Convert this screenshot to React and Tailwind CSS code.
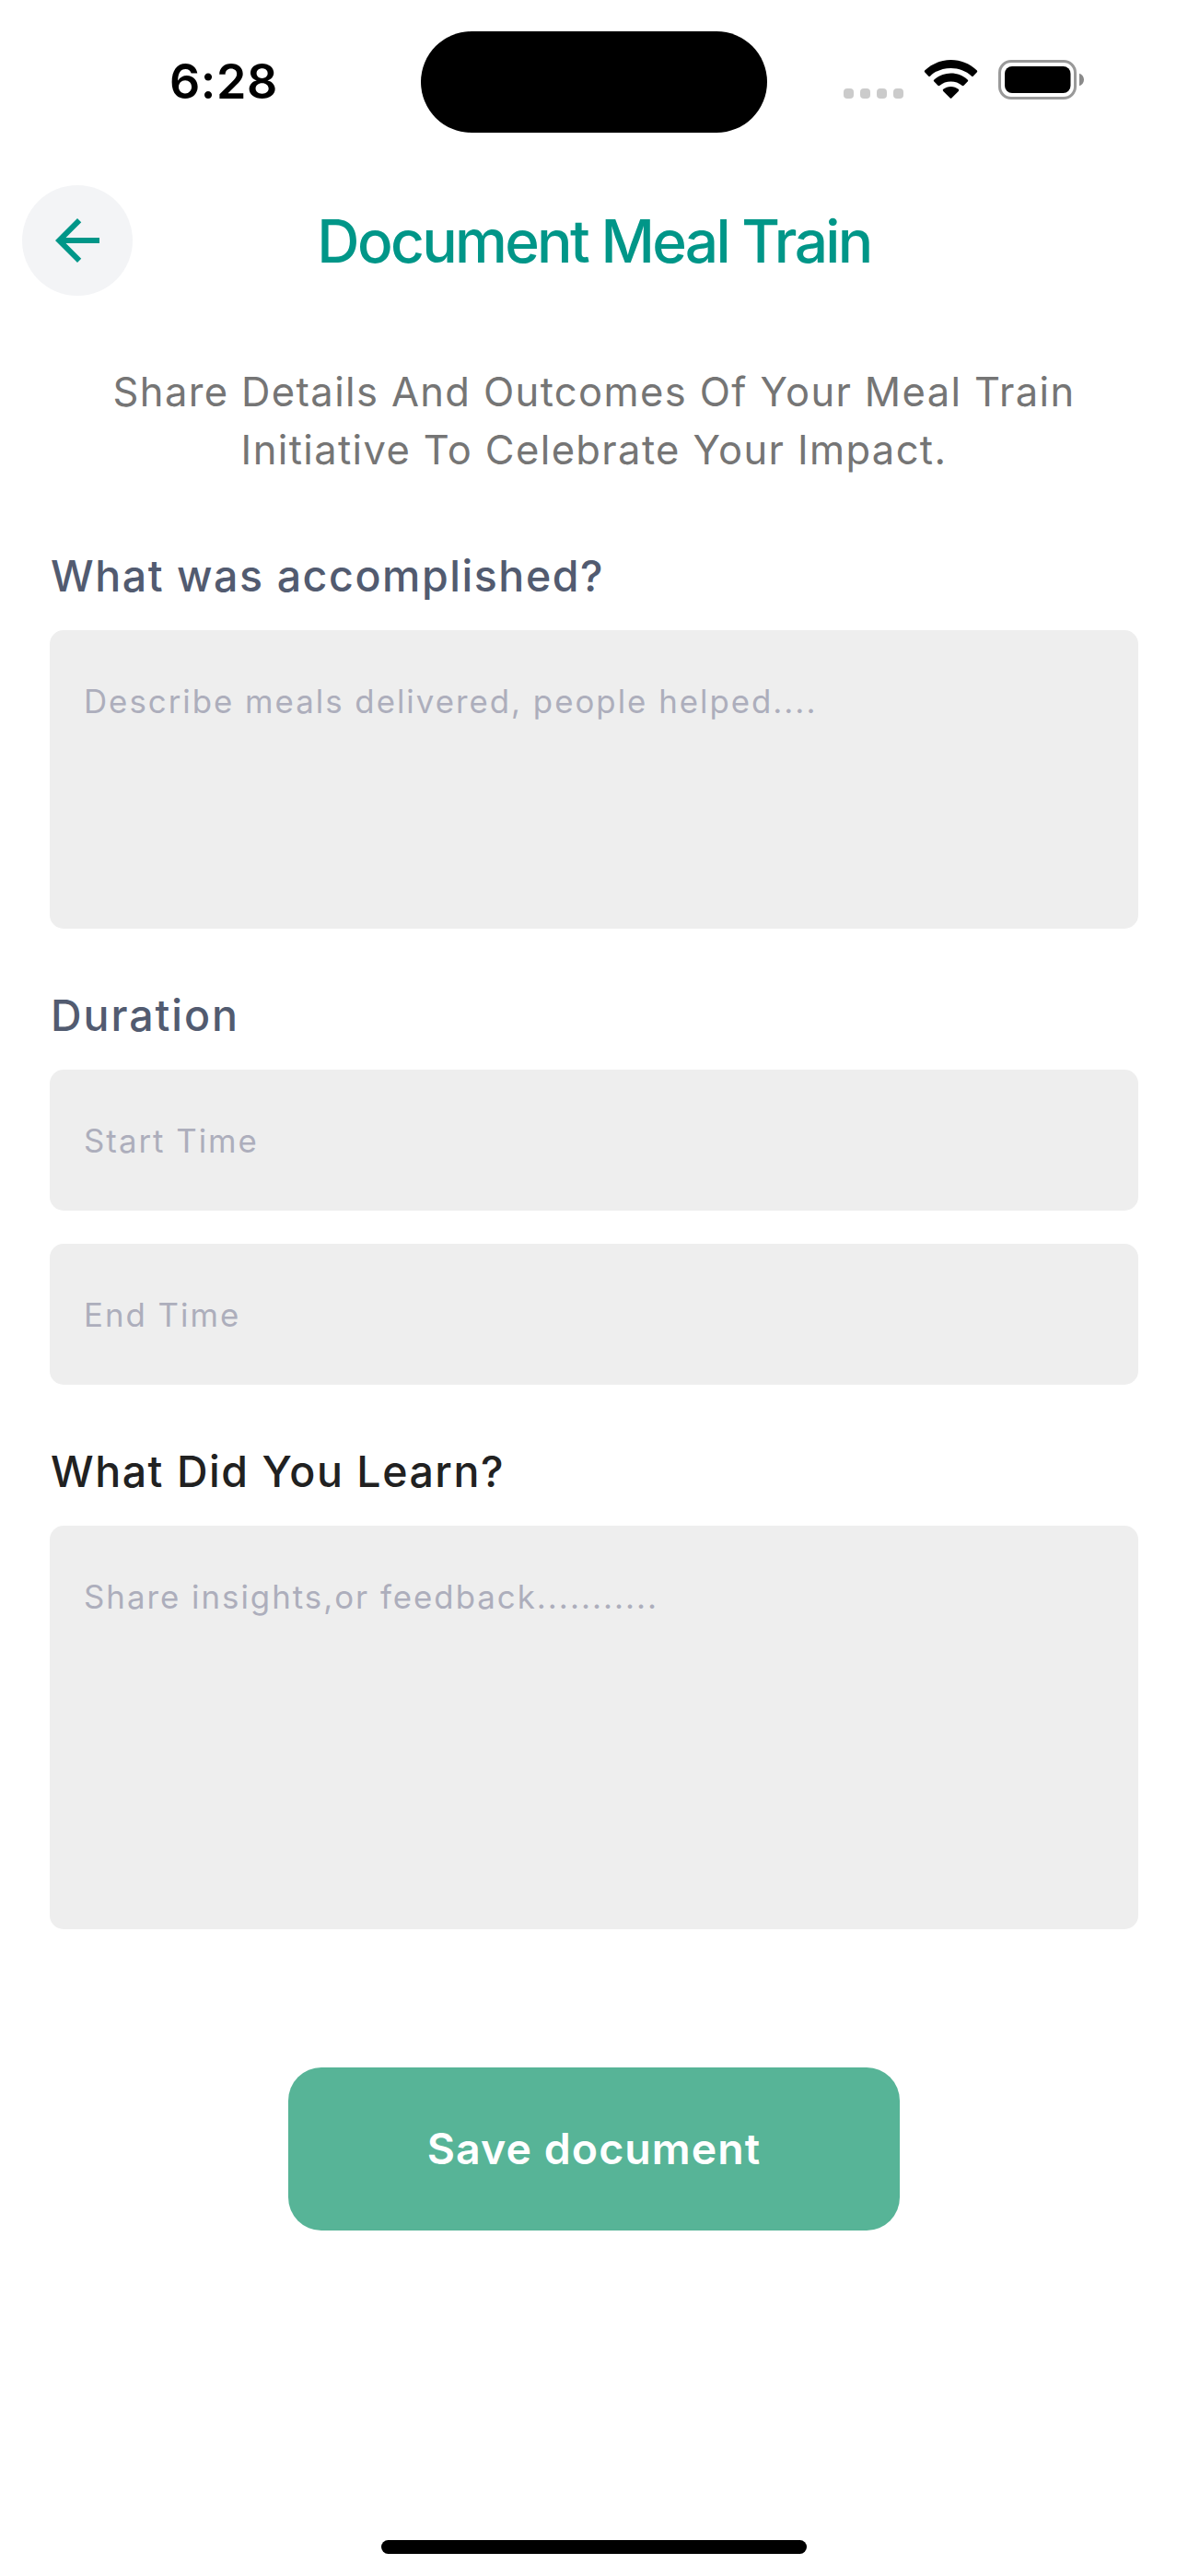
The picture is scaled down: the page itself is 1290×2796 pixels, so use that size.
function StatusBar() {
  return (
    <div className="grid h-[177px] grid-cols-[457px_376px_457px] items-start">
      <time className="mt-[59px] ml-[184px] text-[52px] leading-[60px] font-semibold tracking-[0.6px]">
        6:28
      </time>
      <div className="mt-[34px] h-[110px] rounded-full bg-black" />
      <div className="mt-[65px] ml-[83px] flex h-[43px]">
        <div className="mt-[31px] flex gap-[7px]">
          <span className="size-[11px] rounded-[4px] bg-[#cbcbcb]" />
          <span className="size-[11px] rounded-[4px] bg-[#cbcbcb]" />
          <span className="size-[11px] rounded-[4px] bg-[#cbcbcb]" />
          <span className="size-[11px] rounded-[4px] bg-[#cbcbcb]" />
        </div>
        <svg className="ml-[22px] h-[43px] w-[59px]" viewBox="0 0 59 43" fill="black">
          <path d="M29.5 0C40.3 0 50.2 4.2 57.6 11.2Q58.8 12.3 57.7 13.5L53.9 17.4Q52.9 18.4 51.8 17.4C46 11.9 38.2 8.9 29.5 8.9S13 11.9 7.2 17.4Q6.1 18.4 5.1 17.4L1.3 13.5Q.2 12.3 1.4 11.2C8.8 4.2 18.7 0 29.5 0Z" />
          <path d="M29.5 14.6C36.5 14.6 42.8 17.2 47.6 21.4Q48.8 22.5 47.7 23.6L43.6 27.7Q42.6 28.6 41.5 27.7C38.3 25 34.2 23.5 29.5 23.5S20.7 25 17.5 27.7Q16.4 28.6 15.4 27.7L11.3 23.6Q10.2 22.5 11.4 21.4C16.2 17.2 22.5 14.6 29.5 14.6Z" />
          <path d="M29.5 29C32.6 29 35.5 30.1 37.7 31.8Q38.9 32.8 37.8 33.9L30.5 41.3Q29.5 42.3 28.5 41.3L21.2 33.9Q20.1 32.8 21.3 31.8C23.5 30.1 26.4 29 29.5 29Z" />
        </svg>
        <svg className="ml-[22px] h-[43px] w-[94px]" viewBox="0 0 94 43">
          <rect x="1.5" y="1.5" width="82" height="40" rx="12.5" fill="none" stroke="#999" strokeWidth="3" />
          <rect x="7" y="7" width="71.5" height="29" rx="8" fill="black" />
          <path d="M88 14.8C91 15.7 93 18.4 93 21.5S91 27.3 88 28.2Z" fill="#8a8a8a" />
        </svg>
      </div>
    </div>
  );
}

function Header() {
  return (
    <header className="mt-6 grid h-[120px] grid-cols-[120px_1fr_120px] items-center px-6">
      <button className="flex size-[120px] items-center justify-center rounded-full bg-[#f3f4f6]" aria-label="Back">
        <svg className="size-[72px]" viewBox="0 0 24 24" fill="#009688">
          <path d="M20 11H7.83l5.59-5.59L12 4l-8 8 8 8 1.41-1.41L7.83 13H20v-2z" />
        </svg>
      </button>
      <h1 className="pt-[2px] text-center text-[64px] leading-[80px] font-medium tracking-[-2.66px] whitespace-nowrap text-[#009688]">
        Document Meal Train
      </h1>
    </header>
  );
}

function Label({ className, children }) {
  return (
    <h2 className={`pl-px text-[46.5px] leading-[60px] font-medium ${className}`}>
      {children}
    </h2>
  );
}

function Field({ className, children }) {
  return (
    <div className={`rounded-[15px] bg-[#eeeeee] px-[37px] pt-[54px] text-[34.8px] leading-[46px] tracking-[2px] text-[#adaebc] ${className}`}>
      {children}
    </div>
  );
}

export default function App() {
  return (
    <div className="flex h-[2796px] w-[1290px] flex-col bg-white font-['Inter',sans-serif] text-black">
      <StatusBar />
      <Header />
      <p className="mt-[73px] text-center text-[43.5px] leading-[63px] tracking-[1.37px] text-[#757575]">
        Share Details And Outcomes Of Your Meal Train
        <br />
        Initiative To Celebrate Your Impact.
      </p>
      <main className="mt-[75px] flex flex-col px-[54px]">
        <Label className="tracking-[1.56px] text-[#525b70]">What was accomplished?</Label>
        <Field className="mt-[29px] h-[324px]">Describe meals delivered, people helped....</Field>

        <Label className="mt-[64px] tracking-[1.95px] text-[#525b70]">Duration</Label>
        <Field className="mt-[29px] h-[153px]">Start Time</Field>
        <Field className="mt-[36px] h-[153px]">End Time</Field>

        <Label className="mt-[64px] tracking-[1.53px] text-[#212121]">What Did You Learn?</Label>
        <Field className="mt-[29px] h-[438px]">Share insights,or feedback...........</Field>

        <button className="mt-[150px] h-[177px] w-[664px] self-center rounded-[36px] bg-[#57b497] text-[46.5px] font-semibold tracking-[1.04px] text-white">
          Save document
        </button>
      </main>
      <div className="mt-auto mb-6 h-[15px] w-[462px] self-center rounded-full bg-black" />
    </div>
  );
}
